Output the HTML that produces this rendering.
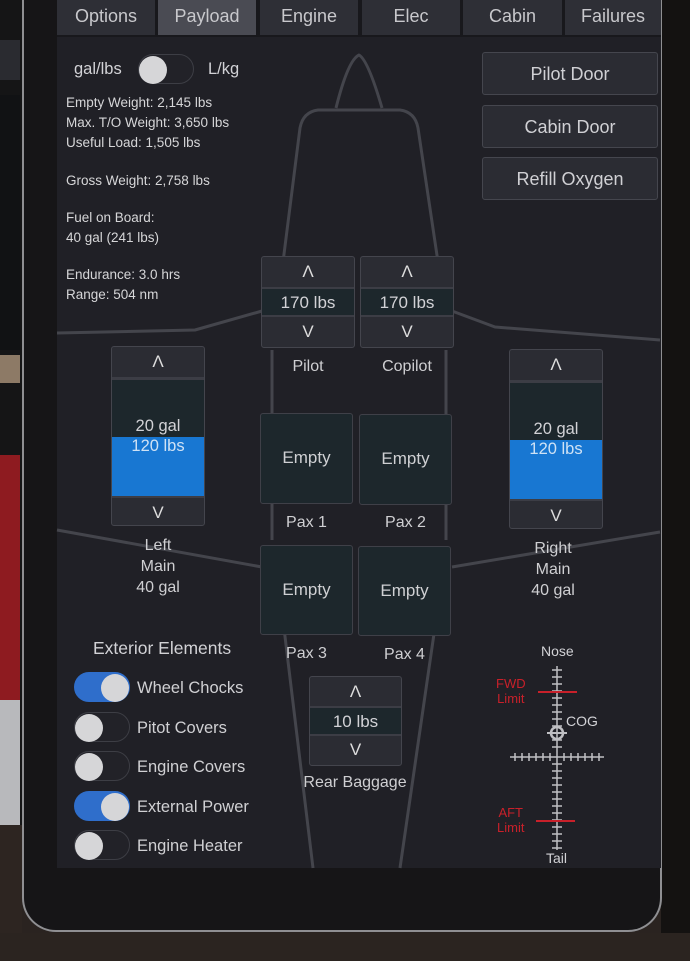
<!DOCTYPE html>
<html><head><meta charset="utf-8"><style>
*{margin:0;padding:0;box-sizing:border-box}
body{width:690px;height:961px;position:relative;overflow:hidden;background:#2a2320;font-family:"Liberation Sans",sans-serif;color:#d2d2d6}
.a{position:absolute}
.screen{left:57px;top:0;width:604px;height:868px;background:#202026}
.tab{top:0;height:35px;background:#2e2f36;color:#c8c8cc;font-size:18px;text-align:center;line-height:32px}
.btn{background:#2b2c33;border:1px solid #45464e;border-radius:3px;color:#d0d0d4;font-size:18px;text-align:center}
.inc{border:1px solid #44454d;border-radius:3px;background:#2b2c33;overflow:hidden}
.inc .u,.inc .d{height:30px;text-align:center;line-height:30px;font-size:17px;color:#ddd}
.inc .v{height:30px;background:#1d272c;border-top:2px solid #3c3d45;border-bottom:2px solid #3c3d45;text-align:center;line-height:27px;font-size:17px}
.seat{background:#1d272c;border:1px solid #3f4048;border-radius:3px;text-align:center;font-size:17px;line-height:88px;color:#cfd0d3}
.lbl{font-size:16px;text-align:center;color:#cfcfd2}
.t{font-size:13.5px;line-height:20px;color:#d6d6d8}
.tg{width:56px;height:30px;border-radius:15px;border:1px solid #3d3e45;background:#222228}
.tg.on{background:#2f6ecb;border-color:#2f6ecb}
.tg i{position:absolute;top:1px;width:28px;height:28px;border-radius:50%;background:#d6d6d8;left:0}
.tg.on i{left:26px}
.tl{font-size:16.5px;color:#d0d0d3}
</style></head><body>
<div class="a" style="left:0;top:0;width:22px;height:961px;background:#151516"></div>
<div class="a" style="left:0;top:40px;width:20px;height:40px;background:#2a2b30"></div>
<div class="a" style="left:0;top:95px;width:20px;height:255px;background:#111214"></div>
<div class="a" style="left:0;top:355px;width:20px;height:28px;background:#8d7a66"></div>
<div class="a" style="left:0;top:455px;width:20px;height:245px;background:#8e1b20"></div>
<div class="a" style="left:0;top:700px;width:20px;height:125px;background:#b8b9bc"></div>
<div class="a" style="left:0;top:825px;width:22px;height:136px;background:#2d2521"></div>
<div class="a" style="left:22px;top:-20px;width:640px;height:952px;background:#161517;border-radius:0 0 34px 34px"></div>
<div class="a" style="left:661px;top:0;width:29px;height:961px;background:#141211"></div>
<div class="a" style="left:0;top:933px;width:690px;height:28px;background:#2b2420"></div>
<div class="a" style="left:22px;top:-20px;width:640px;height:952px;border-radius:0 0 34px 34px;border:2px solid #8f8f92;border-top:none"></div>

<div class="a screen"></div>
<div class="a" style="left:57px;top:0;width:604px;height:37px;background:#18181c"></div>
<div class="a tab" style="left:57px;width:98px">Options</div>
<div class="a tab" style="left:158px;width:98px;background:#4a4b53">Payload</div>
<div class="a tab" style="left:260px;width:98px">Engine</div>
<div class="a tab" style="left:362px;width:98px">Elec</div>
<div class="a tab" style="left:463px;width:99px">Cabin</div>
<div class="a tab" style="left:565px;width:96px">Failures</div>

<svg class="a" style="left:0;top:0" width="690" height="961">
<g fill="none" stroke="#44454c" stroke-width="3" stroke-linejoin="round">
<path d="M336 108 Q348 60 359 55 Q368 60 382 108"/>
<path d="M283 262 L300 128 Q303 112 318 110 L400 110 Q415 112 418 128 L438 262"/>
<path d="M272 350 L272 540 M446 350 L446 540"/>
<path d="M283 620 L313 868 M436 620 L400 868"/>
<path d="M57 333 L195 330 L262 311"/>
<path d="M452 311 L495 327 L660 340"/>
<path d="M57 530 L262 567"/>
<path d="M452 567 L660 532"/>
</g>
</svg>

<div class="a" style="left:74px;top:60px;font-size:16.5px">gal/lbs</div>
<div class="a tg" style="left:138px;top:54px"><i></i></div>
<div class="a" style="left:208px;top:60px;font-size:16.5px">L/kg</div>
<div class="a t" style="left:66px;top:93px">Empty Weight: 2,145 lbs<br>Max. T/O Weight: 3,650 lbs<br>Useful Load: 1,505 lbs</div>
<div class="a t" style="left:66px;top:171px">Gross Weight: 2,758 lbs</div>
<div class="a t" style="left:66px;top:208px">Fuel on Board:<br>40 gal (241 lbs)</div>
<div class="a t" style="left:66px;top:265px">Endurance: 3.0 hrs<br>Range: 504 nm</div>

<div class="a btn" style="left:482px;top:52px;width:176px;height:43px;line-height:43px">Pilot Door</div>
<div class="a btn" style="left:482px;top:105px;width:176px;height:43px;line-height:43px">Cabin Door</div>
<div class="a btn" style="left:482px;top:157px;width:176px;height:43px;line-height:43px">Refill Oxygen</div>

<div class="a inc" style="left:261px;top:256px;width:94px;height:92px"><div class="u">Λ</div><div class="v">170 lbs</div><div class="d">V</div></div>
<div class="a inc" style="left:360px;top:256px;width:94px;height:92px"><div class="u">Λ</div><div class="v">170 lbs</div><div class="d">V</div></div>
<div class="a lbl" style="left:261px;top:358px;width:94px">Pilot</div>
<div class="a lbl" style="left:360px;top:358px;width:94px">Copilot</div>

<div class="a seat" style="left:260px;top:413px;width:93px;height:91px">Empty</div>
<div class="a seat" style="left:359px;top:414px;width:93px;height:91px">Empty</div>
<div class="a lbl" style="left:260px;top:514px;width:93px">Pax 1</div>
<div class="a lbl" style="left:359px;top:514px;width:93px">Pax 2</div>
<div class="a seat" style="left:260px;top:545px;width:93px;height:90px">Empty</div>
<div class="a seat" style="left:358px;top:546px;width:93px;height:90px">Empty</div>
<div class="a lbl" style="left:260px;top:645px;width:93px">Pax 3</div>
<div class="a lbl" style="left:358px;top:646px;width:93px">Pax 4</div>

<div class="a inc" style="left:309px;top:676px;width:93px;height:90px"><div class="u" style="height:29px">Λ</div><div class="v">10 lbs</div><div class="d" style="height:27px;line-height:27px">V</div></div>
<div class="a lbl" style="left:290px;top:774px;width:130px">Rear Baggage</div>

<div class="a inc" style="left:111px;top:346px;width:94px;height:180px">
 <div class="u">Λ</div>
 <div style="height:60px;background:#1d272c;border-top:3px solid #3c3d45"></div>
 <div style="height:59px;background:#1877d2"></div>
 <div class="d" style="border-top:2px solid #3c3d45">V</div>
</div>
<div class="a" style="left:111px;top:416px;width:94px;text-align:center;font-size:16.5px;line-height:20px">20 gal<br><span style="color:#cfe2f5">120 lbs</span></div>
<div class="a lbl" style="left:111px;top:535px;width:94px;line-height:21px">Left<br>Main<br>40 gal</div>

<div class="a inc" style="left:509px;top:349px;width:94px;height:180px">
 <div class="u">Λ</div>
 <div style="height:60px;background:#1d272c;border-top:3px solid #3c3d45"></div>
 <div style="height:59px;background:#1877d2"></div>
 <div class="d" style="border-top:2px solid #3c3d45">V</div>
</div>
<div class="a" style="left:509px;top:419px;width:94px;text-align:center;font-size:16.5px;line-height:20px">20 gal<br><span style="color:#cfe2f5">120 lbs</span></div>
<div class="a lbl" style="left:506px;top:538px;width:94px;line-height:21px">Right<br>Main<br>40 gal</div>

<div class="a" style="left:93px;top:638px;font-size:17.5px">Exterior Elements</div>
<div class="a tg on" style="left:74px;top:672px"><i></i></div><div class="a tl" style="left:137px;top:679px">Wheel Chocks</div>
<div class="a tg" style="left:74px;top:712px"><i></i></div><div class="a tl" style="left:137px;top:719px">Pitot Covers</div>
<div class="a tg" style="left:74px;top:751px"><i></i></div><div class="a tl" style="left:137px;top:758px">Engine Covers</div>
<div class="a tg on" style="left:74px;top:791px"><i></i></div><div class="a tl" style="left:137px;top:798px">External Power</div>
<div class="a tg" style="left:74px;top:830px"><i></i></div><div class="a tl" style="left:137px;top:837px">Engine Heater</div>

<div class="a" style="left:541px;top:643px;font-size:14px">Nose</div>
<div class="a" style="left:546px;top:850px;font-size:14px">Tail</div>
<div class="a" style="left:566px;top:713px;font-size:14px">COG</div>
<div class="a" style="left:496px;top:676px;font-size:13px;color:#c8202a;line-height:15px;text-align:center">FWD<br>Limit</div>
<div class="a" style="left:497px;top:805px;font-size:13px;color:#c8202a;line-height:15px;text-align:center">AFT<br>Limit</div>
<svg class="a" style="left:500px;top:660px" width="110" height="195">
<g stroke="#bfbfc3" stroke-width="1.5">
<line x1="57" y1="6" x2="57" y2="190"/>
<line x1="10" y1="97" x2="104" y2="97"/>
<path d="M52 10h10M52 17h10M52 24h10M52 31h10M52 38h10M52 45h10M52 52h10M52 59h10M52 66h10M52 73h10M52 80h10M52 87h10M52 104h10M52 111h10M52 118h10M52 125h10M52 132h10M52 139h10M52 146h10M52 153h10M52 160h10M52 167h10M52 174h10M52 181h10M52 188h10"/>
<path d="M15 93v8M22 93v8M29 93v8M36 93v8M43 93v8M50 93v8M64 93v8M71 93v8M78 93v8M85 93v8M92 93v8M99 93v8"/>
<circle cx="57" cy="73" r="6" fill="none" stroke-width="2.5"/>
<line x1="47" y1="73" x2="67" y2="73" stroke-width="2"/>
</g>
<line x1="38" y1="32" x2="77" y2="32" stroke="#c8202a" stroke-width="2"/>
<line x1="36" y1="161" x2="75" y2="161" stroke="#c8202a" stroke-width="2"/>
</svg>
</body></html>
